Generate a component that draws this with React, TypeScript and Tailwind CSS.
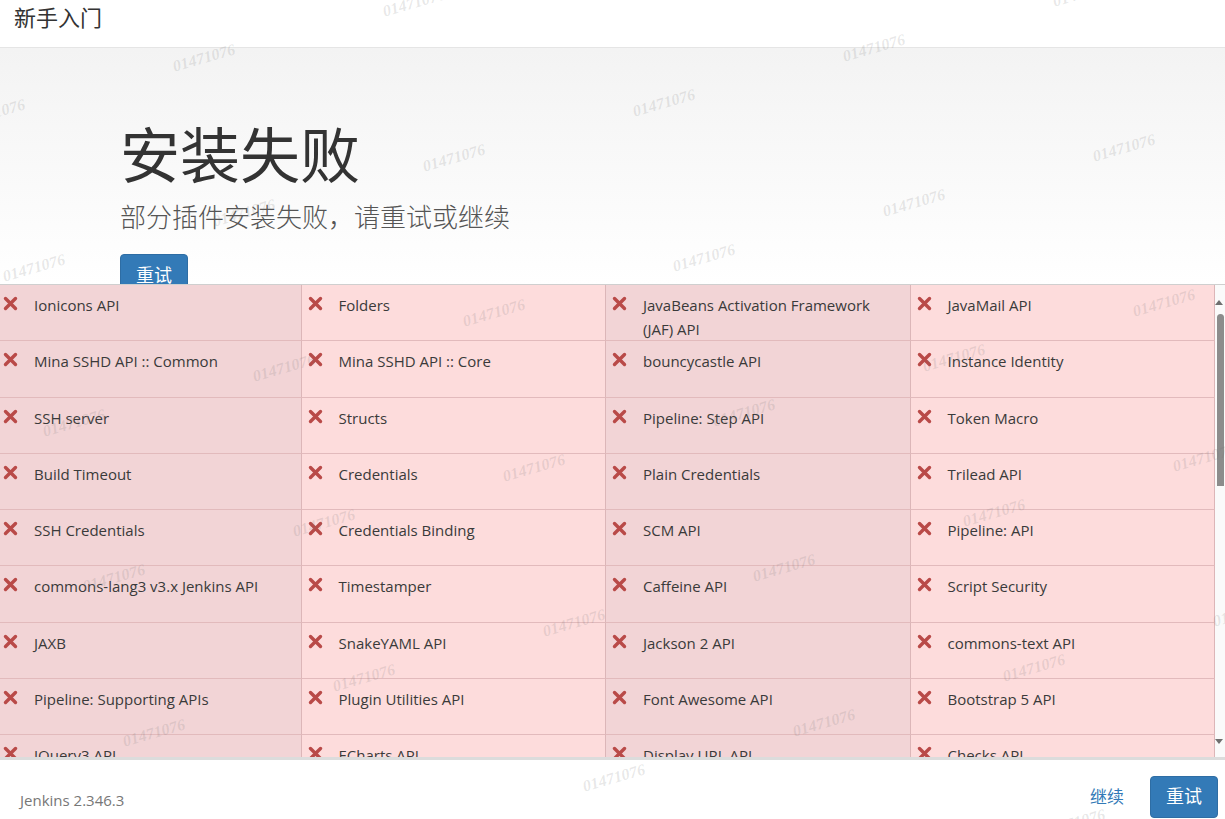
import React from 'react';

const plugins = [
  'Ionicons API', 'Folders', 'JavaBeans Activation Framework (JAF) API', 'JavaMail API',
  'Mina SSHD API :: Common', 'Mina SSHD API :: Core', 'bouncycastle API', 'Instance Identity',
  'SSH server', 'Structs', 'Pipeline: Step API', 'Token Macro',
  'Build Timeout', 'Credentials', 'Plain Credentials', 'Trilead API',
  'SSH Credentials', 'Credentials Binding', 'SCM API', 'Pipeline: API',
  'commons-lang3 v3.x Jenkins API', 'Timestamper', 'Caffeine API', 'Script Security',
  'JAXB', 'SnakeYAML API', 'Jackson 2 API', 'commons-text API',
  'Pipeline: Supporting APIs', 'Plugin Utilities API', 'Font Awesome API', 'Bootstrap 5 API',
  'JQuery3 API', 'ECharts API', 'Display URL API', 'Checks API',
];

// watermark lattice, read off the screenshot
const marks: { x: number; y: number }[] = [];
for (let i = -6; i <= 8; i++) {
  for (let j = -8; j <= 8; j++) {
    const x = 34 + i * 250 + j * 210;
    const y = 268 + i * 100 - j * 55;
    if (x > -80 && x < 1300 && y > -30 && y < 850) marks.push({ x, y });
  }
}

function FailIcon() {
  return (
    <svg width="15" height="15" viewBox="0 0 15 15" className="-mt-[3px] shrink-0">
      <path d="M2.5 2.5 L12.5 12.5 M12.5 2.5 L2.5 12.5" stroke="#b94a48" strokeWidth="3.4" strokeLinecap="round" />
    </svg>
  );
}

function PluginCell({ name, index }: { name: string; index: number }) {
  const dark = index % 2 === 0;
  return (
    <div
      className={
        'h-[56.25px] flex items-start pt-[8px] pl-[6px] pr-[18px] border-r border-b border-r-[#dcb6b8] border-b-[#e2babc] overflow-hidden ' +
        (dark ? 'bg-[#f2d4d6]' : 'bg-[#fddcdc]')
      }
    >
      <div className="w-[31px] h-[24px] flex items-center shrink-0">
        <FailIcon />
      </div>
      <div className="text-[15px] leading-[24px] text-[#3a3a3a]">{name}</div>
    </div>
  );
}

export default function App() {
  return (
    <div className="relative h-[819px] w-full overflow-hidden bg-white flex flex-col font-['Open_Sans','Noto_Sans_CJK_SC',sans-serif] text-[#333]">
      {/* Header */}
      <div className="h-[48px] shrink-0 border-b border-[#e5e5e5] px-[14px] pt-[2px]">
        <h4 className="text-[22px] leading-[30px] text-[#333]">新手入门</h4>
      </div>

      {/* Jumbotron */}
      <div className="h-[236px] shrink-0 overflow-hidden bg-gradient-to-b from-[#f3f3f3] to-white pl-[120px] pt-[74px]">
        <h1 className="text-[60px] leading-[66px] text-[#333]">安装失败</h1>
        <p className="mt-[11px] text-[26px] leading-[36px] font-light text-[#555]">部分插件安装失败，请重试或继续</p>
        <button className="mt-[19px] h-[42px] px-[15px] rounded-[4px] bg-[#337ab7] border border-[#2e6da4] text-white text-[18px]">
          重试
        </button>
      </div>

      {/* Failed plugin list */}
      <div className="h-[473px] shrink-0 border-t border-[#cfcfcf] flex overflow-hidden">
        <div className="flex-1 overflow-hidden">
          <div className="-ml-[3px] w-[calc(100%+3px)] grid grid-cols-4">
            {plugins.map((p, i) => (
              <PluginCell key={p} name={p} index={i} />
            ))}
          </div>
        </div>
        <div className="w-[10px] shrink-0 bg-[#fafafa] flex flex-col items-end pr-[1px]">
          <div className="mt-[15px] mr-[1px] w-0 h-0 border-x-[4px] border-x-transparent border-b-[5px] border-b-[#6f6f6f]" />
          <div className="mt-[9px] w-[7px] h-[172px] rounded-t-[4px] bg-[#8c8c8c]" />
          <div className="flex-1" />
          <div className="mb-[13px] mr-[1px] w-0 h-0 border-x-[4px] border-x-transparent border-t-[5px] border-t-[#6f6f6f]" />
        </div>
      </div>

      {/* Footer */}
      <div className="flex-1 border-t-[3px] border-[#dcdcdc] flex items-center pt-[14px] pl-[20px] pr-[7px]">
        <span className="mt-[7px] text-[15px] text-[#777]">Jenkins 2.346.3</span>
        <div className="ml-auto flex items-center gap-[26px]">
          <a className="text-[17px] text-[#337ab7]">继续</a>
          <button className="h-[42px] px-[15px] rounded-[4px] bg-[#337ab7] border border-[#2e6da4] text-white text-[18px]">
            重试
          </button>
        </div>
      </div>

      {/* Watermark */}
      <div className="pointer-events-none absolute inset-0 overflow-hidden">
        {marks.map((m, k) => (
          <span
            key={k}
            className="absolute -translate-x-1/2 -translate-y-1/2 -rotate-[16deg] font-['Liberation_Serif',serif] italic font-bold text-[16px] text-[rgba(110,110,110,0.16)] whitespace-nowrap"
            style={{ left: m.x, top: m.y }}
          >
            01471076
          </span>
        ))}
      </div>
    </div>
  );
}
